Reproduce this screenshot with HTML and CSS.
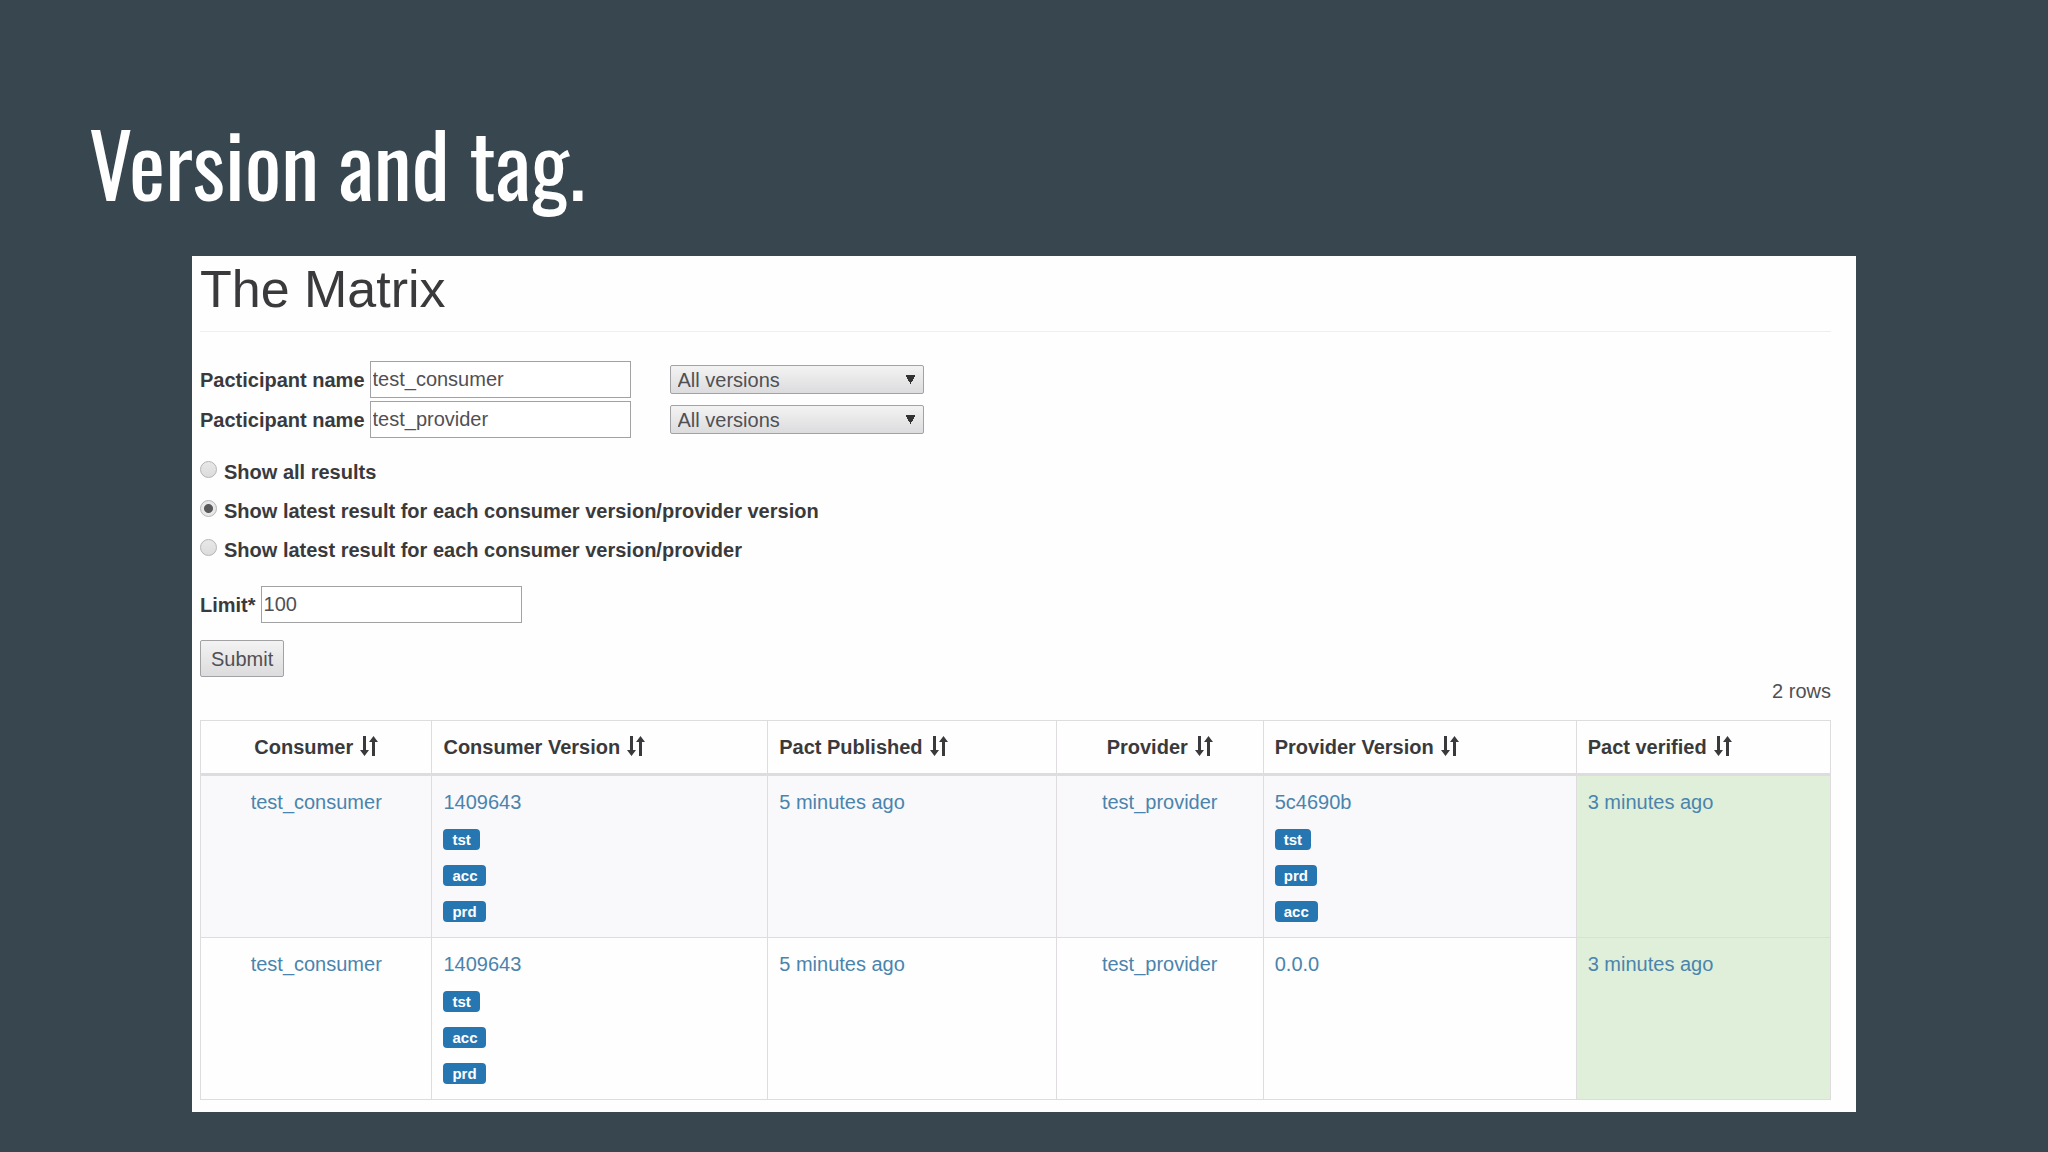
FILE: index.html
```html
<!DOCTYPE html>
<html lang="en">
<head>
<meta charset="utf-8">
<title>Version and tag.</title>
<link rel="stylesheet" href="styles.css">
</head>
<body>
<svg class="defs" aria-hidden="true">
  <symbol id="sort" viewBox="0 0 18 20">
    <path d="M3 0h3v14h3l-4.500 6-4.500-6h3zM12 20h3V6h3l-4.500-6-4.500 6h3z"/>
  </symbol>
</svg>
<main class="slide">
  <h1 class="slide-title">Version and tag.</h1>
  <section class="panel">
    <h2 class="panel-title">The Matrix</h2>
    <form class="form">
      <div class="field-row">
        <label for="name1">Pacticipant name</label>
        <input class="text-input" id="name1" type="text" value="test_consumer">
        <select class="select" aria-label="Consumer versions"><option>All versions</option></select>
      </div>
      <div class="field-row">
        <label for="name2">Pacticipant name</label>
        <input class="text-input" id="name2" type="text" value="test_provider">
        <select class="select" aria-label="Provider versions"><option>All versions</option></select>
      </div>
      <div class="radios">
        <label class="radio-row"><input class="radio" type="radio" name="latest">Show all results</label>
        <label class="radio-row"><input class="radio" type="radio" name="latest" checked>Show latest result for each consumer version/provider version</label>
        <label class="radio-row"><input class="radio" type="radio" name="latest">Show latest result for each consumer version/provider</label>
      </div>
      <div class="field-row">
        <label for="limit">Limit*</label>
        <input class="text-input" id="limit" type="text" value="100">
      </div>
      <button class="submit" type="submit">Submit</button>
    </form>
    <p class="count">2 rows</p>
    <table class="matrix">
      <colgroup><col class="c1"><col class="c2"><col class="c3"><col class="c4"><col class="c5"><col class="c6"></colgroup>
      <thead>
        <tr>
          <th class="center">Consumer<svg class="sort"><use href="#sort"/></svg></th>
          <th>Consumer Version<svg class="sort"><use href="#sort"/></svg></th>
          <th>Pact Published<svg class="sort"><use href="#sort"/></svg></th>
          <th class="center">Provider<svg class="sort"><use href="#sort"/></svg></th>
          <th>Provider Version<svg class="sort"><use href="#sort"/></svg></th>
          <th>Pact verified<svg class="sort"><use href="#sort"/></svg></th>
        </tr>
      </thead>
      <tbody>
        <tr>
          <td class="center"><a href="#">test_consumer</a></td>
          <td><a href="#">1409643</a>
            <div class="tags">
              <div class="tag"><span class="badge">tst</span></div>
              <div class="tag"><span class="badge">acc</span></div>
              <div class="tag"><span class="badge">prd</span></div>
            </div></td>
          <td><a href="#">5 minutes ago</a></td>
          <td class="center"><a href="#">test_provider</a></td>
          <td><a href="#">5c4690b</a>
            <div class="tags">
              <div class="tag"><span class="badge">tst</span></div>
              <div class="tag"><span class="badge">prd</span></div>
              <div class="tag"><span class="badge">acc</span></div>
            </div></td>
          <td class="success"><a href="#">3 minutes ago</a></td>
        </tr>
        <tr>
          <td class="center"><a href="#">test_consumer</a></td>
          <td><a href="#">1409643</a>
            <div class="tags">
              <div class="tag"><span class="badge">tst</span></div>
              <div class="tag"><span class="badge">acc</span></div>
              <div class="tag"><span class="badge">prd</span></div>
            </div></td>
          <td><a href="#">5 minutes ago</a></td>
          <td class="center"><a href="#">test_provider</a></td>
          <td><a href="#">0.0.0</a></td>
          <td class="success"><a href="#">3 minutes ago</a></td>
        </tr>
      </tbody>
    </table>
  </section>
</main>
</body>
</html>
```
FILE: styles.css
```css
* { box-sizing: border-box; }
body {
  margin: 0;
  background: #38474f;
  color: #3a3a3c;
  font: 20px/28px "Liberation Sans", Arial, sans-serif;
}
.defs { display: none; }
.slide { padding: 102px 192px 40px; }
.slide-title {
  margin: 0 0 34px -103px;
  color: #fff;
  font: 400 86px/120px Oswald, "Liberation Sans Narrow", "Roboto Condensed", "Open Sans Condensed", sans-serif;
}
.panel {
  padding: 4px 25px 12px 8px;
  background: #fefefe;
}
.panel-title {
  margin: 0 0 29px;
  padding-bottom: 13px;
  border-bottom: 1px solid #eee;
  font-weight: 400;
  font-size: 52px;
  line-height: 58px;
}
.form { display: flex; flex-direction: column; align-items: flex-start; gap: 3px; }
.field-row { display: flex; align-items: center; gap: 5px; font-weight: 700; }
.text-input {
  width: 261px;
  height: 37px;
  padding: 0 2px;
  border: 1px solid #a2a2a4;
  background: #fff;
  color: #505054;
  font: inherit;
  font-weight: 400;
}
.select {
  appearance: none;
  width: 254px;
  height: 29px;
  margin-left: 34px;
  padding: 0 7px;
  border: 1px solid #a2a2a4;
  border-radius: 2px;
  background:
    conic-gradient(from -30deg at 50% 100%, #333 60deg, transparent 0) right 8px center / 9px 9px no-repeat,
    linear-gradient(#f3f3f3, #dcdcde);
  color: #505054;
  font: inherit;
  font-weight: 400;
  line-height: 26px;
}
.radios { display: flex; flex-direction: column; gap: 11px; margin: 17px 0 19px; }
.radio-row { display: flex; align-items: flex-start; gap: 7px; font-weight: 700; }
.radio {
  appearance: none;
  width: 17px;
  height: 17px;
  margin: 3px 0 0;
  border: 1px solid #b4b4b6;
  border-radius: 50%;
  background: linear-gradient(#e8e8e8, #dcdcdc);
}
.radio:checked { background: radial-gradient(circle, #58585a 4px, #e8e8e8 5px); }
.submit {
  height: 37px;
  margin-top: 14px;
  padding: 0 10px;
  border: 1px solid #a2a2a4;
  border-radius: 2px;
  background: linear-gradient(#f3f3f3, #dcdcde);
  color: #505054;
  font: inherit;
}
.count { margin: 0 0 15px; text-align: right; color: #505054; }
.matrix { width: 100%; table-layout: fixed; border-collapse: collapse; }
.c1 { width: 14.2%; }
.c2 { width: 20.6%; }
.c3 { width: 17.7%; }
.c4 { width: 12.7%; }
.c5 { width: 19.2%; }
.c6 { width: 15.6%; }
.matrix th, .matrix td {
  padding: 12px 11px;
  border: 1px solid #dfdce0;
  text-align: left;
  vertical-align: top;
}
.matrix td { padding-bottom: 8px; }
.matrix th { border-bottom-width: 3px; }
.matrix .center { text-align: center; }
.matrix tbody tr:nth-child(odd) { background: #f9f8fb; }
.matrix .success { background: #dfefd9; }
.sort { width: 18px; height: 20px; margin-left: 7px; vertical-align: -2px; fill: #3a3a3c; }
a { color: #4a84ad; text-decoration: none; }
.tags { padding-top: 5px; }
.tag { display: flex; height: 36px; align-items: center; }
.badge {
  padding: 0 9px;
  border-radius: 4px;
  background: #2676b2;
  color: #fff;
  font-weight: 700;
  font-size: 15px;
  line-height: 21px;
}
```
